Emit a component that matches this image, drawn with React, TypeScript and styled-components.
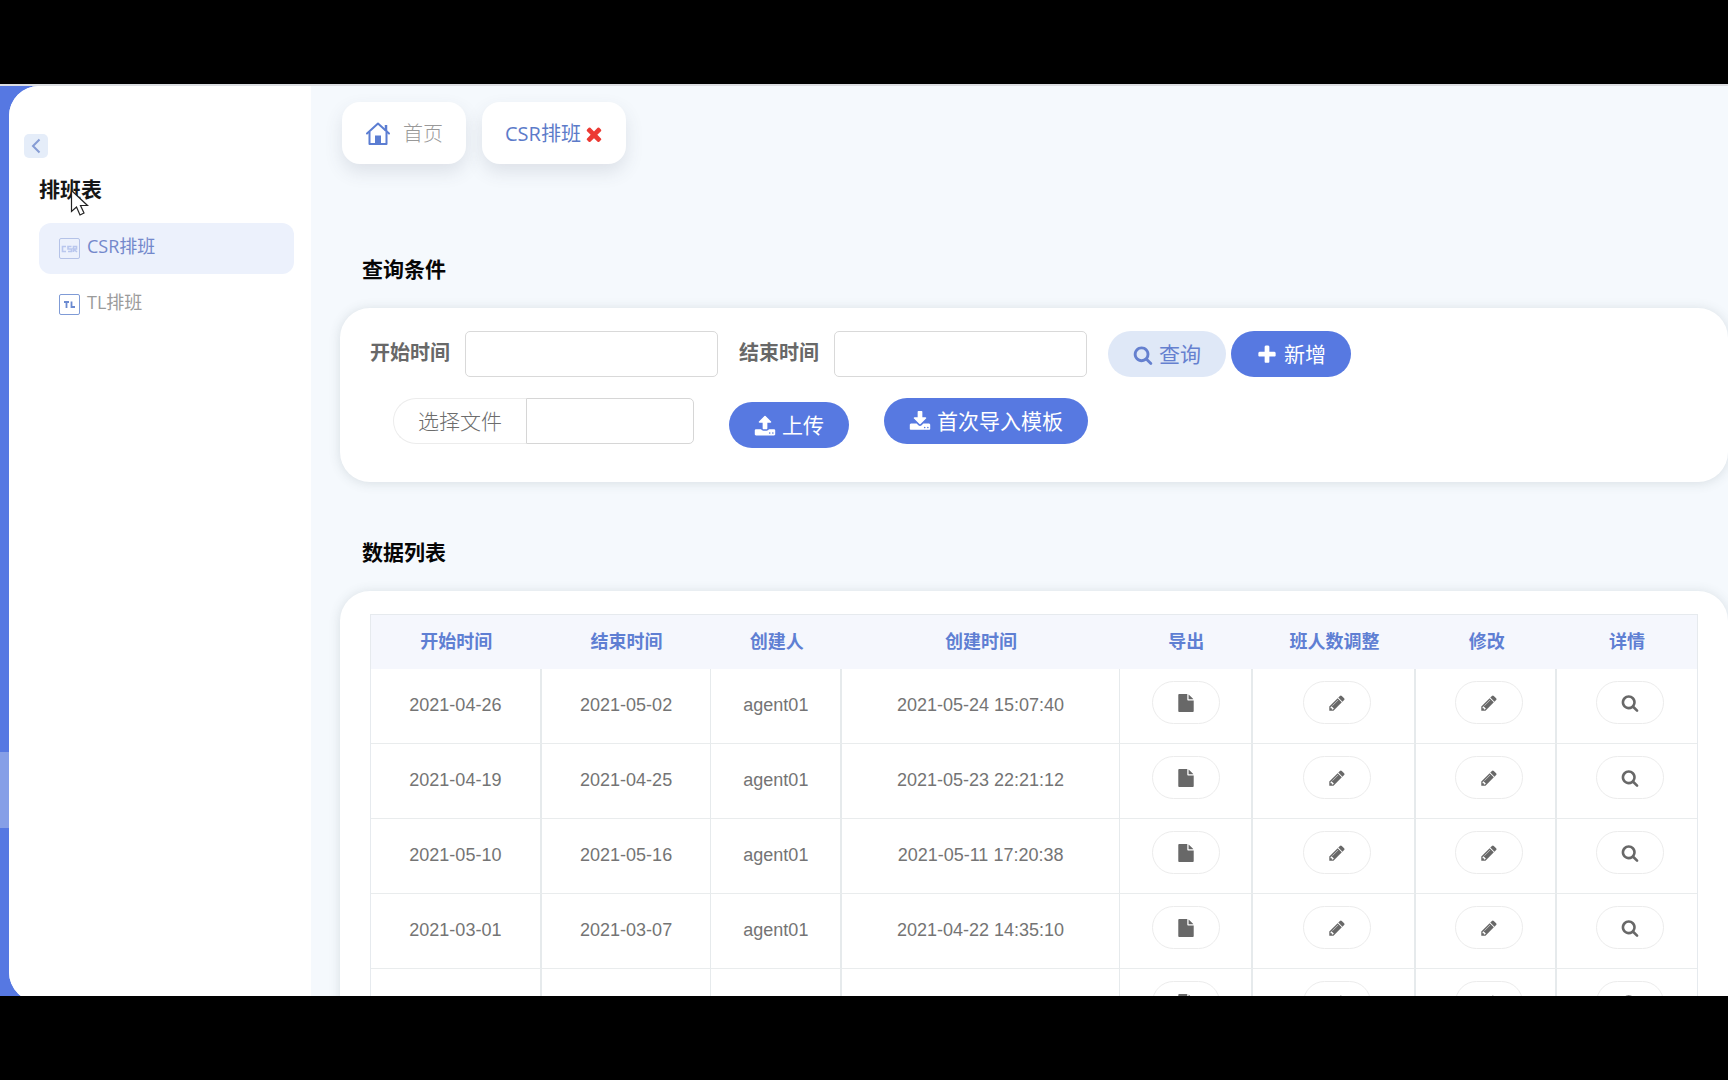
import React from "react";
import styled, { createGlobalStyle } from "styled-components";

const UI_FONT = '"Open Sans", "Noto Sans CJK SC", sans-serif';
const DATA_FONT = '"Liberation Sans", "Noto Sans CJK SC", sans-serif';

const GlobalStyle = createGlobalStyle`
  *, *::before, *::after { box-sizing: border-box; }
  body { margin: 0; background: #000; font-family: ${UI_FONT}; }
  button, input { font-family: inherit; margin: 0; }
`;

const Frame = styled.div`
  height: 100vh;
  padding: 84px 0;
  background: #000;
`;

const Screen = styled.div`
  display: flex;
  height: 100%;
  overflow: hidden;
  background: #5678e2;
  border-top: 2px solid #dcdee2;
`;

const Rail = styled.div`
  display: flex;
  flex-direction: column;
  justify-content: flex-end;
  flex: none;
  width: 9px;
  padding-bottom: 168px;
`;

const RailActive = styled.div`
  height: 76px;
  background: #869fe7;
`;

const Backdrop = styled.div`
  display: flex;
  flex: 1;
  min-width: 0;
  height: calc(100% + 6px);
  background: #f5f9fd;
  border-radius: 30px 0 0 30px;
`;

const Sidebar = styled.aside`
  flex: none;
  width: 302px;
  padding: 48px 17px 0 15px;
  background: #fff;
  border-radius: 30px 0 0 30px;
`;

const CollapseButton = styled.button`
  display: grid;
  place-items: center;
  width: 24px;
  height: 24px;
  padding: 0;
  border: 0;
  border-radius: 5px;
  background: #e5edf9;
  color: #869cd4;
`;

const MenuTitle = styled.h2`
  position: relative;
  margin: 16px 0 0 15px;
  font-size: 21px;
  line-height: 30px;
  font-weight: 700;
  color: #161616;
`;

const Pointer = styled.svg`
  position: absolute;
  left: 31px;
  top: 15px;
  width: 20px;
  height: 28px;
`;

const Menu = styled.nav`
  display: flex;
  flex-direction: column;
  gap: 5px;
  margin: 19px 0 0 15px;
`;

const MenuItem = styled.a<{ $active?: boolean }>`
  display: flex;
  align-items: center;
  gap: 7px;
  height: 51px;
  padding: 0 20px 5px;
  border-radius: 12px;
  background: ${(p) => (p.$active ? "#ecf1fc" : "transparent")};
  color: ${(p) => (p.$active ? "#7388cb" : "#9b9b9b")};
  font-size: 18px;
  line-height: 26px;
  text-decoration: none;
`;

const MenuBadge = styled.span<{ $soft?: boolean }>`
  display: grid;
  place-items: center;
  width: 21px;
  height: 21px;
  margin-top: 5px;
  border: 1px solid ${(p) => (p.$soft ? "#b5c3e8" : "#7f9bd6")};
  border-radius: 2px;
  color: ${(p) => (p.$soft ? "#b9c7ee" : "#6b8ad0")};
`;

const Main = styled.main`
  flex: 1;
  min-width: 0;
  padding: 16px 0 0 29px;
  overflow: hidden;
`;

const Tabs = styled.nav`
  display: flex;
  gap: 16px;
  padding-left: 2px;
`;

const Tab = styled.div<{ $active?: boolean }>`
  display: flex;
  align-items: center;
  gap: 2px;
  height: 62px;
  padding: ${(p) => (p.$active ? "2px 21px 0 23px" : "2px 23px 0")};
  border-radius: 18px;
  background: #fff;
  box-shadow: 0 8px 18px rgba(60, 70, 90, 0.13);
  font-size: 20px;
  line-height: 28px;
`;

const TabLink = styled.a<{ $active?: boolean }>`
  display: flex;
  align-items: center;
  gap: 12px;
  color: ${(p) => (p.$active ? "#5c7bc9" : "#999")};
  font-weight: ${(p) => (p.$active ? 400 : 300)};
  text-decoration: none;
`;

const CloseButton = styled.button`
  display: grid;
  place-items: center;
  width: 22px;
  height: 22px;
  padding: 0;
  border: 0;
  background: none;
  color: #ec3a33;
`;

const SectionTitle = styled.h3<{ $first?: boolean }>`
  margin: ${(p) => (p.$first ? "90px" : "55px")} 0 0 22px;
  font-size: 21px;
  line-height: 30px;
  font-weight: 700;
  color: #060606;
`;

const Card = styled.section`
  margin-top: 24px;
  padding: 23px 30px 34px;
  border-radius: 30px;
  background: #fff;
  box-shadow: 0 1px 12px rgba(60, 80, 90, 0.16);
`;

const FormRow = styled.div<{ $second?: boolean }>`
  display: flex;
  align-items: flex-start;
  ${(p) => p.$second && "margin-top: 21px; padding-left: 23px;"}
`;

const Label = styled.label`
  width: 95px;
  font-size: 20px;
  line-height: 44px;
  height: 46px;
  font-weight: 700;
  color: #686868;
  white-space: nowrap;
`;

const TextInput = styled.input`
  width: 253px;
  height: 46px;
  margin-right: 21px;
  padding: 0 12px;
  border: 1px solid #d9d9d9;
  border-radius: 5px;
  background: #fff;
  font-size: 18px;
`;

const FileGroup = styled.div`
  display: flex;
  margin-right: 35px;
`;

const FileButton = styled.button`
  width: 133px;
  height: 46px;
  padding: 0;
  border: 1px solid #ececec;
  border-right: 0;
  border-radius: 23px 0 0 23px;
  background: #fff;
  color: #6c6c6c;
  font-size: 21px;
  font-weight: 300;
  line-height: 30px;
`;

const FileInput = styled.input`
  width: 168px;
  height: 46px;
  padding: 0 12px;
  border: 1px solid #d6d6d6;
  border-radius: 0 5px 5px 0;
  font-size: 18px;
`;

const Button = styled.button<{ $soft?: boolean }>`
  display: flex;
  align-items: center;
  justify-content: center;
  gap: 6px;
  height: 46px;
  padding: 0 25px;
  border: 0;
  border-radius: 23px;
  background: ${(p) => (p.$soft ? "#dfe8f7" : "#5779e1")};
  color: ${(p) => (p.$soft ? "#6580cf" : "#fff")};
  font-size: 21px;
  line-height: 30px;
  white-space: nowrap;

  svg {
    margin-top: 2px;
  }
`;

const Spaced = styled.div`
  display: flex;
  gap: 5px;
`;

const UploadSlot = styled.div`
  margin: 4px 35px 0 0;
`;

const Table = styled.table`
  width: 100%;
  table-layout: fixed;
  border-collapse: separate;
  border-spacing: 0;
  border: 1px solid #e6eaee;
  font-family: ${DATA_FONT};
`;

const Th = styled.th`
  height: 54px;
  padding: 0;
  background: #f5f7fd;
  color: #5f7fd3;
  font-size: 18px;
  line-height: 26px;
  font-weight: 700;
`;

const Td = styled.td<{ $line: number }>`
  height: 75px;
  padding: 0 0 2px;
  border-right: ${(p) => p.$line}px solid #e6eaec;
  border-bottom: 1px solid #e9eced;
  color: #747474;
  font-size: 18px;
  line-height: 26px;
  text-align: center;
  white-space: nowrap;
`;

const ActionCell = styled(Td)<{ $shift?: boolean }>`
  padding: ${(p) => (p.$shift ? "12px 0 0 6px" : "12px 0 0 2px")};
  vertical-align: top;
`;

const Action = styled.button`
  display: grid;
  place-items: center;
  width: 68px;
  height: 43px;
  margin: 0 auto;
  padding: 0;
  border: 1px solid #ececec;
  border-radius: 22px;
  background: #fff;
  color: #686868;
`;

const glyphs = {
  search:
    "M1216 832q0-185-131.5-316.5t-316.5-131.5-316.5 131.5-131.5 316.5 131.5 316.5 316.5 131.5 316.5-131.5 131.5-316.5zm512 832q0 52-38 90t-90 38q-54 0-90-38l-343-342q-179 124-399 124-143 0-273.5-55.5t-225-150-150-225-55.5-273.5 55.5-273.5 150-225 225-150 273.5-55.5 273.5 55.5 225 150 150 225 55.5 273.5q0 220-124 399l343 343q37 37 37 90z",
  plus:
    "M1600 736v192q0 40-28 68t-68 28h-416v416q0 40-28 68t-68 28h-192q-40 0-68-28t-28-68v-416h-416q-40 0-68-28t-28-68v-192q0-40 28-68t68-28h416v-416q0-40 28-68t68-28h192q40 0 68 28t28 68v416h416q40 0 68 28t28 68z",
  times:
    "M1490 1322q0 40-28 68l-136 136q-28 28-68 28t-68-28l-294-294-294 294q-28 28-68 28t-68-28l-136-136q-28-28-28-68t28-68l294-294-294-294q-28-28-28-68t28-68l136-136q28-28 68-28t68 28l294 294 294-294q28-28 68-28t68 28l136 136q28 28 28 68t-28 68l-294 294 294 294q28 28 28 68z",
  pencil:
    "M491 1536l91-91-235-235-91 91v107h128v128h107zm523-928q0-22-22-22-10 0-17 7l-542 542q-7 7-7 17 0 22 22 22 10 0 17-7l542-542q7-7 7-17zm-54-192l416 416-832 832h-416v-416zm683 96q0 53-37 90l-166 166-416-416 166-165q36-38 90-38 53 0 91 38l235 234q37 39 37 91z",
  upload:
    "M1344 1472q0-26-19-45t-45-19-45 19-19 45 19 45 45 19 45-19 19-45zm256 0q0-26-19-45t-45-19-45 19-19 45 19 45 45 19 45-19 19-45zm128-224v320q0 40-28 68t-68 28h-1472q-40 0-68-28t-28-68v-320q0-40 28-68t68-28h427q21 56 70.5 92t110.5 36h256q61 0 110.5-36t70.5-92h427q40 0 68 28t28 68zm-325-648q-17 40-59 40h-256v448q0 26-19 45t-45 19h-256q-26 0-45-19t-19-45v-448h-256q-42 0-59-40-17-39 14-69l448-448q18-19 45-19t45 19l448 448q31 30 14 69z",
  download:
    "M1344 1344q0-26-19-45t-45-19-45 19-19 45 19 45 45 19 45-19 19-45zm256 0q0-26-19-45t-45-19-45 19-19 45 19 45 45 19 45-19 19-45zm128-224v320q0 40-28 68t-68 28h-1472q-40 0-68-28t-28-68v-320q0-40 28-68t68-28h465l135 136q58 56 136 56t136-56l136-136h464q40 0 68 28t28 68zm-325-569q17 41-14 70l-448 448q-18 19-45 19t-45-19l-448-448q-31-29-14-70 17-39 59-39h256v-448q0-26 19-45t45-19h256q26 0 45 19t19 45v448h256q42 0 59 39z",
  file:
    "M1152 512v-472q22 14 36 28l408 408q14 14 28 36h-472zm-128 32q0 40 28 68t68 28h544v1056q0 40-28 68t-68 28h-1344q-40 0-68-28t-28-68v-1600q0-40 28-68t68-28h800v544z",
};

type GlyphName = keyof typeof glyphs;

const Glyph = ({ name, size }: { name: GlyphName; size: number }) => (
  <svg width={size} height={size} viewBox="0 0 1792 1792" fill="currentColor" aria-hidden="true">
    <path d={glyphs[name]} />
  </svg>
);

const HomeIcon = () => (
  <svg width="26" height="26" viewBox="0 0 26 26" fill="none" stroke="#5b7dd2" strokeWidth="2" aria-hidden="true">
    <path d="M2 12.500 13 2.500l11 10" strokeLinecap="round" strokeLinejoin="round" />
    <path d="M4.500 11v12h17V11" strokeLinejoin="round" />
    <path d="M21 4v6" strokeWidth="2.500" />
    <path d="M10 14.500h6V23h-6z" fill="#5b7dd2" stroke="none" />
  </svg>
);

const CsrMark = () => (
  <svg width="17" height="8" viewBox="0 0 17 8" fill="none" stroke="currentColor" strokeWidth="1.600" aria-hidden="true">
    <path d="M5 1.500H1.500v5H5M10.500 1.500H7V4h3.500v2.500H7M12.500 7V1.500h3V4h-3l3.500 3" />
  </svg>
);

const TlMark = () => (
  <svg width="13" height="9" viewBox="0 0 13 9" fill="none" stroke="currentColor" strokeWidth="1.800" aria-hidden="true">
    <path d="M1 2h5M3.500 2v6M8.500 1.500V7H12" />
  </svg>
);

const columns = [
  { title: "开始时间", width: 171, line: 2 },
  { title: "结束时间", width: 170, line: 1 },
  { title: "创建人", width: 131, line: 2 },
  { title: "创建时间", width: 278, line: 1 },
  { title: "导出", width: 133, line: 2 },
  { title: "班人数调整", width: 164, line: 2 },
  { title: "修改", width: 141, line: 2 },
  { title: "详情", width: 140, line: 0 },
];
const totalWidth = columns.reduce((sum, c) => sum + c.width, 0);

const rows = [
  ["2021-04-26", "2021-05-02", "agent01", "2021-05-24 15:07:40"],
  ["2021-04-19", "2021-04-25", "agent01", "2021-05-23 22:21:12"],
  ["2021-05-10", "2021-05-16", "agent01", "2021-05-11 17:20:38"],
  ["2021-03-01", "2021-03-07", "agent01", "2021-04-22 14:35:10"],
  ["", "", "", ""],
];

const actions: GlyphName[] = ["file", "pencil", "pencil", "search"];

export default function App() {
  return (
    <Frame>
      <GlobalStyle />
      <Screen>
        <Rail>
          <RailActive />
        </Rail>
        <Backdrop>
          <Sidebar>
            <CollapseButton aria-label="收起">
              <svg width="12" height="16" viewBox="0 0 12 16" fill="none" stroke="currentColor" strokeWidth="2" aria-hidden="true">
                <path d="M9.500 1.500 3 8l6.500 6.500" />
              </svg>
            </CollapseButton>
            <MenuTitle>
              排班表
              <Pointer viewBox="0 0 20 28" aria-hidden="true">
                <path d="M1.500 1.500v21l5-4.500 3.500 8 4-2-3.500-7.500h7z" fill="#fff" stroke="#222" strokeWidth="1.200" />
              </Pointer>
            </MenuTitle>
            <Menu>
              <MenuItem href="#csr" $active>
                <MenuBadge $soft><CsrMark /></MenuBadge>
                CSR排班
              </MenuItem>
              <MenuItem href="#tl">
                <MenuBadge><TlMark /></MenuBadge>
                TL排班
              </MenuItem>
            </Menu>
          </Sidebar>
          <Main>
            <Tabs>
              <Tab>
                <TabLink href="#home"><HomeIcon />首页</TabLink>
              </Tab>
              <Tab $active>
                <TabLink href="#csr" $active>CSR排班</TabLink>
                <CloseButton aria-label="关闭"><Glyph name="times" size={22} /></CloseButton>
              </Tab>
            </Tabs>
            <SectionTitle $first>查询条件</SectionTitle>
            <Card>
              <FormRow>
                <Label htmlFor="start">开始时间</Label>
                <TextInput id="start" />
                <Label htmlFor="end">结束时间</Label>
                <TextInput id="end" />
                <Spaced>
                  <Button $soft><Glyph name="search" size={20} />查询</Button>
                  <Button><Glyph name="plus" size={22} />新增</Button>
                </Spaced>
              </FormRow>
              <FormRow $second>
                <FileGroup>
                  <FileButton>选择文件</FileButton>
                  <FileInput aria-label="选择文件" readOnly />
                </FileGroup>
                <UploadSlot>
                  <Button><Glyph name="upload" size={22} />上传</Button>
                </UploadSlot>
                <Button><Glyph name="download" size={22} />首次导入模板</Button>
              </FormRow>
            </Card>
            <SectionTitle>数据列表</SectionTitle>
            <Card>
              <Table>
                <colgroup>
                  {columns.map((c) => (
                    <col key={c.title} style={{ width: `${(c.width / totalWidth) * 100}%` }} />
                  ))}
                </colgroup>
                <thead>
                  <tr>
                    {columns.map((c) => (
                      <Th key={c.title} scope="col">{c.title}</Th>
                    ))}
                  </tr>
                </thead>
                <tbody>
                  {rows.map((row, r) => (
                    <tr key={r}>
                      {row.map((value, i) => (
                        <Td key={i} $line={columns[i].line}>{value}</Td>
                      ))}
                      {actions.map((name, i) => (
                        <ActionCell key={i} $line={columns[i + 4].line} $shift={i > 0}>
                          <Action aria-label={columns[i + 4].title}>
                            <Glyph name={name} size={18} />
                          </Action>
                        </ActionCell>
                      ))}
                    </tr>
                  ))}
                </tbody>
              </Table>
            </Card>
          </Main>
        </Backdrop>
      </Screen>
    </Frame>
  );
}
